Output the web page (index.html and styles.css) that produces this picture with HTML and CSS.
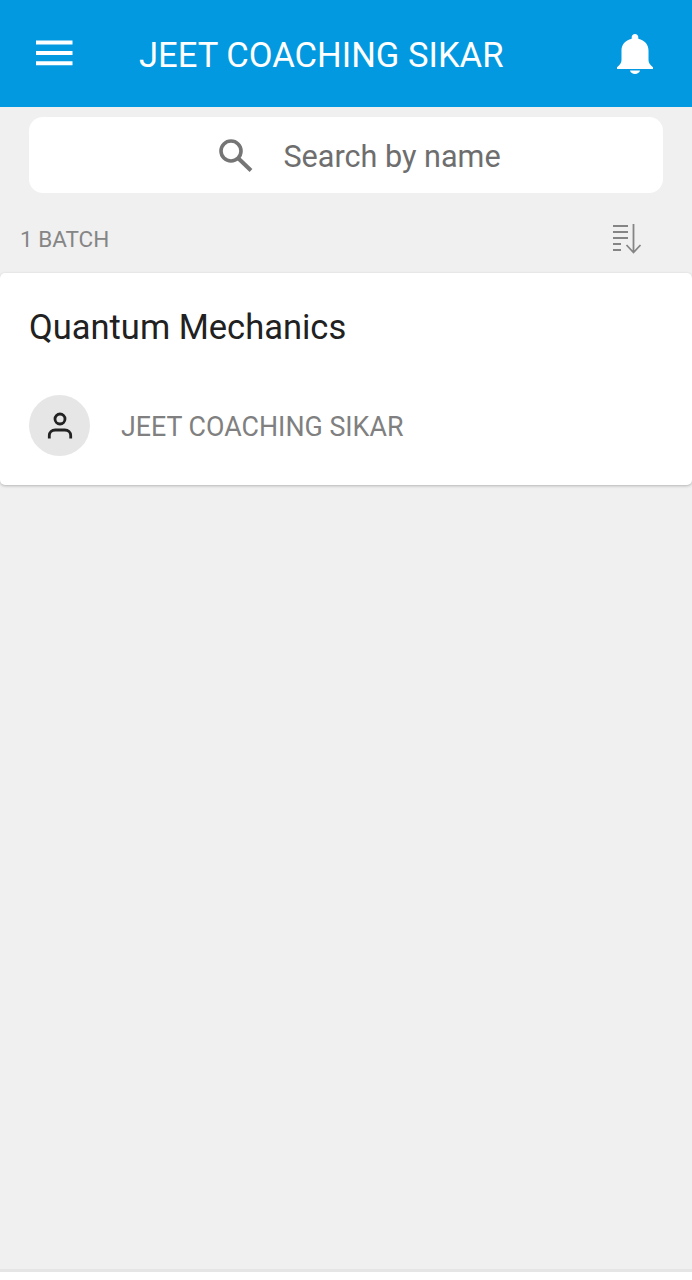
FILE: index.html
```html
<!DOCTYPE html>
<html lang="en">
<head>
    <meta charset="UTF-8">
    <meta name="viewport" content="width=device-width, initial-scale=1.0">
    <title>Batches</title>
    <link rel="stylesheet" href="styles.css">
</head>
<body>
    <div class="screen">
        <header class="app-bar">
            <svg class="menu-icon" width="37" height="26" viewBox="0 0 37 26">
                <path d="M0 2.500h36.500M0 13h36.500M0 23.300h36.500" stroke="#fff" stroke-width="4" fill="none"/>
            </svg>
            <h1 class="app-title">JEET COACHING SIKAR</h1>
            <svg class="bell-icon" width="36" height="40" viewBox="0 0 36 40">
                <path fill="#fff" d="M18 0c-2 0-3.300 1.400-3.300 3.200v1.500C8 6.200 4.500 10.800 4.500 16.500v9.500c0 3-1.500 4.600-4.500 7.200V35h36v-1.800c-3-2.600-4.500-4.200-4.500-7.200v-9.500c0-5.700-3.500-10.300-10.200-11.800V3.200C21.300 1.400 20 0 18 0z"/>
                <path fill="#fff" d="M13 36.500h10c-.5 2.200-2.600 3.500-5 3.500s-4.500-1.300-5-3.500z"/>
            </svg>
        </header>

        <div class="search-wrap">
            <div class="search-box">
                <svg class="search-icon" width="35" height="34" viewBox="0 0 35 34">
                    <circle cx="13" cy="13" r="10" fill="none" stroke="#757575" stroke-width="3.600"/>
                    <path d="M20.500 20.500L33 32.500" stroke="#757575" stroke-width="4" fill="none"/>
                </svg>
                <span class="search-text">Search by name</span>
            </div>
        </div>

        <div class="list-head">
            <span class="batch-count">1 BATCH</span>
            <svg class="sort-icon" width="30" height="30" viewBox="0 0 30 30">
                <path d="M1 2h15M1 8h15M1 14h15M1 20h8M1 26h8" stroke="#858585" stroke-width="2" fill="none"/>
                <path d="M21.500 0v28.500M14.500 21l7 7.500 7-7.500" stroke="#858585" stroke-width="1.800" fill="none"/>
            </svg>
        </div>

        <div class="batch-card">
            <div class="batch-name">Quantum Mechanics</div>
            <div class="batch-owner">
                <div class="avatar">
                    <svg width="28" height="28" viewBox="0 0 28 28">
                        <circle cx="14" cy="7" r="5" fill="none" stroke="#222" stroke-width="2.800"/>
                        <path d="M3.300 26.500v-3c0-3.500 2.500-5.500 6-5.500h9.400c3.500 0 6 2 6 5.500v3" fill="none" stroke="#222" stroke-width="2.800"/>
                    </svg>
                </div>
                <span class="owner-name">JEET COACHING SIKAR</span>
            </div>
        </div>

        <div class="spacer"></div>
        <div class="bottom-line"></div>
    </div>
</body>
</html>
```

FILE: styles.css
```css
* {
    box-sizing: border-box;
}

html, body {
    margin: 0;
    padding: 0;
    height: 100%;
    background: #fff;
}

body {
    font-family: 'Roboto', 'Liberation Sans', sans-serif;
    overflow: hidden;
}

.screen {
    height: 1272px;
    display: flex;
    flex-direction: column;
    background: #f0f0f0;
}

.app-bar {
    height: 107px;
    flex: none;
    display: flex;
    align-items: center;
    padding: 0 39px 0 36px;
    background: #0299e0;
    color: #fff;
}

.menu-icon {
    flex: none;
    margin-top: -1px;
}

.app-title {
    flex: 1;
    margin: 2px 0 0 66px;
    font-size: 34.600px;
    font-weight: 400;
    white-space: nowrap;
}

.bell-icon {
    flex: none;
    margin-top: 1px;
}

.search-wrap {
    padding: 10px 29px 0;
}

.search-box {
    height: 76px;
    display: flex;
    align-items: center;
    justify-content: center;
    gap: 30px;
    padding-left: 27px;
    background: #fff;
    border-radius: 14px;
}

.search-text {
    margin-top: 2px;
    font-size: 30.600px;
    color: #6e6e6e;
}

.list-head {
    height: 80px;
    display: flex;
    align-items: center;
    justify-content: space-between;
    padding: 12px 50px 0 20px;
}

.batch-count {
    font-size: 22.500px;
    color: #858585;
}

.batch-card {
    height: 212px;
    padding: 34px 29px 0;
    background: #fff;
    border-radius: 5px;
    box-shadow: 0 1px 3px rgba(0, 0, 0, 0.25);
}

.batch-name {
    font-size: 34.500px;
    line-height: 40px;
    color: #212121;
}

.batch-owner {
    display: flex;
    align-items: center;
    gap: 31px;
    margin-top: 48px;
}

.avatar {
    width: 61px;
    height: 61px;
    display: flex;
    align-items: center;
    justify-content: center;
    background: #e6e6e6;
    border-radius: 50%;
}

.owner-name {
    margin-top: 2px;
    font-size: 26.800px;
    color: #808080;
}

.spacer {
    flex: 1;
}

.bottom-line {
    height: 3px;
    background: #e5e5e5;
}
```
